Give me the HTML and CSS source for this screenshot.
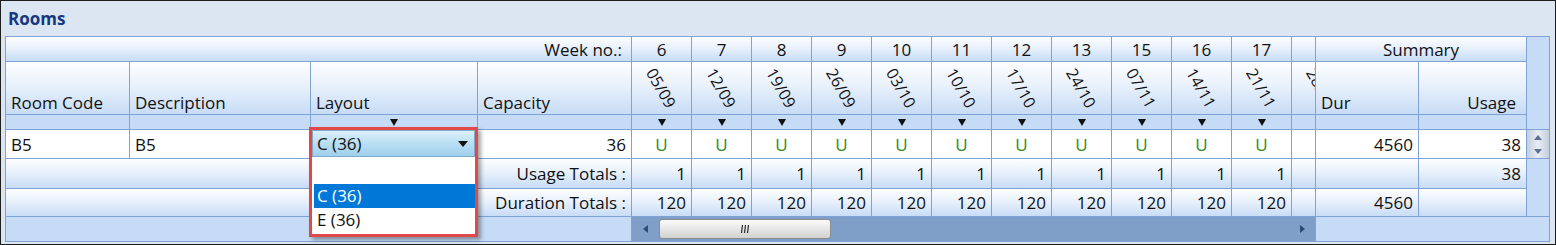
FILE: index.html
```html
<!DOCTYPE html>
<html lang="en">
<head>
    <meta charset="UTF-8">
    <title>Rooms</title>
    <link rel="stylesheet" href="styles.css">
</head>
<body>
    <div class="panel">
        <div class="panel-title">Rooms</div>

        <div class="grid">
            <!-- week numbers -->
            <div class="cell head week-label">Week no.:</div>
            <div class="cell head center">6</div>
            <div class="cell head center">7</div>
            <div class="cell head center">8</div>
            <div class="cell head center">9</div>
            <div class="cell head center">10</div>
            <div class="cell head center">11</div>
            <div class="cell head center">12</div>
            <div class="cell head center">13</div>
            <div class="cell head center">15</div>
            <div class="cell head center">16</div>
            <div class="cell head center">17</div>
            <div class="cell head"></div>
            <div class="cell head center summary">Summary</div>
            <div class="cell side vfill-top"></div>

            <!-- column titles -->
            <div class="cell head title">Room Code</div>
            <div class="cell head title">Description</div>
            <div class="cell head title">Layout</div>
            <div class="cell head title">Capacity</div>
            <div class="cell head date"><span>05/09</span></div>
            <div class="cell head date"><span>12/09</span></div>
            <div class="cell head date"><span>19/09</span></div>
            <div class="cell head date"><span>26/09</span></div>
            <div class="cell head date"><span>03/10</span></div>
            <div class="cell head date"><span>10/10</span></div>
            <div class="cell head date"><span>17/10</span></div>
            <div class="cell head date"><span>24/10</span></div>
            <div class="cell head date"><span>07/11</span></div>
            <div class="cell head date"><span>14/11</span></div>
            <div class="cell head date"><span>21/11</span></div>
            <div class="cell head date clip"><div class="ghost"><span>28/11</span></div></div>
            <div class="cell head title">Dur</div>
            <div class="cell head title right">Usage</div>

            <!-- filter row -->
            <div class="cell filter"></div>
            <div class="cell filter"></div>
            <div class="cell filter center"><i class="tri"></i></div>
            <div class="cell filter"></div>
            <div class="cell filter center"><i class="tri"></i></div>
            <div class="cell filter center"><i class="tri"></i></div>
            <div class="cell filter center"><i class="tri"></i></div>
            <div class="cell filter center"><i class="tri"></i></div>
            <div class="cell filter center"><i class="tri"></i></div>
            <div class="cell filter center"><i class="tri"></i></div>
            <div class="cell filter center"><i class="tri"></i></div>
            <div class="cell filter center"><i class="tri"></i></div>
            <div class="cell filter center"><i class="tri"></i></div>
            <div class="cell filter center"><i class="tri"></i></div>
            <div class="cell filter center"><i class="tri"></i></div>
            <div class="cell filter"></div>
            <div class="cell filter"></div>
            <div class="cell filter"></div>

            <!-- data row -->
            <div class="cell data">B5</div>
            <div class="cell data">B5</div>
            <div class="cell data layout">
                <div class="dropdown">
                    <div class="combo">
                        <span>C (36)</span>
                        <i class="combo-arrow"></i>
                    </div>
                    <div class="list">
                        <div class="item"></div>
                        <div class="item selected">C (36)</div>
                        <div class="item">E (36)</div>
                    </div>
                </div>
            </div>
            <div class="cell data num">36</div>
            <div class="cell data center usage">U</div>
            <div class="cell data center usage">U</div>
            <div class="cell data center usage">U</div>
            <div class="cell data center usage">U</div>
            <div class="cell data center usage">U</div>
            <div class="cell data center usage">U</div>
            <div class="cell data center usage">U</div>
            <div class="cell data center usage">U</div>
            <div class="cell data center usage">U</div>
            <div class="cell data center usage">U</div>
            <div class="cell data center usage">U</div>
            <div class="cell data"></div>
            <div class="cell data num">4560</div>
            <div class="cell data num">38</div>
            <div class="cell vscroll">
                <i class="arrow-up"></i>
                <i class="arrow-down"></i>
            </div>

            <!-- usage totals -->
            <div class="cell total num label">Usage Totals :</div>
            <div class="cell total num">1</div>
            <div class="cell total num">1</div>
            <div class="cell total num">1</div>
            <div class="cell total num">1</div>
            <div class="cell total num">1</div>
            <div class="cell total num">1</div>
            <div class="cell total num">1</div>
            <div class="cell total num">1</div>
            <div class="cell total num">1</div>
            <div class="cell total num">1</div>
            <div class="cell total num">1</div>
            <div class="cell total"></div>
            <div class="cell total"></div>
            <div class="cell total num">38</div>
            <div class="cell side vfill-bottom"></div>

            <!-- duration totals -->
            <div class="cell total num label">Duration Totals :</div>
            <div class="cell total num">120</div>
            <div class="cell total num">120</div>
            <div class="cell total num">120</div>
            <div class="cell total num">120</div>
            <div class="cell total num">120</div>
            <div class="cell total num">120</div>
            <div class="cell total num">120</div>
            <div class="cell total num">120</div>
            <div class="cell total num">120</div>
            <div class="cell total num">120</div>
            <div class="cell total num">120</div>
            <div class="cell total"></div>
            <div class="cell total num">4560</div>
            <div class="cell total"></div>

            <!-- horizontal scroll row -->
            <div class="cell side scroll-left"></div>
            <div class="cell hscroll">
                <i class="arrow-left"></i>
                <div class="thumb">
                    <svg width="10" height="10" viewBox="0 0 10 10">
                        <path d="M2.5 1 L1.5 9 M5.5 1 L4.5 9 M8.5 1 L7.5 9" stroke="#2b2b2b" stroke-width="1.2" fill="none"/>
                    </svg>
                </div>
                <div class="track-rest"></div>
                <i class="arrow-right"></i>
            </div>
            <div class="cell side scroll-right"></div>
        </div>
    </div>
</body>
</html>
```

FILE: styles.css
```css
body {
    margin: 0;
    font-family: 'Open Sans', 'Noto Sans', sans-serif;
    font-size: 17px;
    color: #111;
}

.panel {
    width: 1556px;
    height: 245px;
    box-sizing: border-box;
    border: 1px solid #1d1d1d;
    background-color: #dce6f2;
}
.panel-title {
    height: 35px;
    line-height: 36px;
    padding-left: 7px;
    font-weight: bold;
    color: #17377f;
}

.grid {
    display: grid;
    grid-template-columns: 123px 180px 166px 153px repeat(11, 59px) 23px 102px 107px 22px;
    grid-template-rows: 24px 52px 14px 28px 29px 27px 24px;
    gap: 1px;
    padding: 1px;
    margin-left: 4px;
    width: max-content;
    background-color: #80a3d5;
}

.cell {
    display: flex;
    align-items: center;
    padding: 0 5px;
    white-space: nowrap;
    min-width: 0;
}
.center {
    justify-content: center;
    padding: 0;
}
.num {
    justify-content: flex-end;
}

.head {
    background: linear-gradient(#fdfeff, #e9f1fb 45%, #c7dcf6);
}
.week-label {
    grid-column: 1 / 5;
    justify-content: flex-end;
    padding-right: 9px;
}
.summary {
    grid-column: 17 / 19;
}
.side {
    background-color: #c6dbf5;
}
.vfill-top {
    grid-column: 19;
    grid-row: 1 / 4;
}
.vfill-bottom {
    grid-column: 19;
    grid-row: 5 / 7;
}

.title {
    align-items: flex-end;
    line-height: 20px;
    padding-bottom: 1px;
}
.title.right {
    justify-content: flex-end;
    padding-right: 10px;
}

.date {
    justify-content: center;
    padding: 0;
}
.date span {
    display: inline-block;
    font-size: 16px;
    transform: rotate(60deg);
}
.date.clip {
    justify-content: flex-start;
    overflow: hidden;
}
.ghost {
    flex: none;
    width: 59px;
    display: flex;
    justify-content: center;
}

.filter {
    background-color: #c6dbf5;
}
.tri {
    width: 0;
    height: 0;
    border-left: 4.5px solid transparent;
    border-right: 4.5px solid transparent;
    border-top: 7px solid #111;
}

.data {
    background-color: #fff;
}
.usage {
    color: #2f8a1d;
}
.layout {
    position: relative;
}

/* open layout picker, drawn over the rows below */
.dropdown {
    position: absolute;
    left: -2px;
    top: -3px;
    z-index: 5;
    width: 169px;
    height: 110px;
    box-sizing: border-box;
    border: 3px solid #e0484a;
    background-color: #fff;
    box-shadow: 3px 3px 4px rgba(0, 0, 0, 0.35);
}
.combo {
    height: 27px;
    box-sizing: border-box;
    display: flex;
    align-items: center;
    justify-content: space-between;
    padding: 0 6px 0 4px;
    border: 1px solid #7fa9c8;
    background: linear-gradient(#dcf0fb, #b8def3 50%, #a0d0ec);
}
.combo-arrow {
    width: 0;
    height: 0;
    border-left: 5px solid transparent;
    border-right: 5px solid transparent;
    border-top: 6px solid #111;
}
.list {
    padding-left: 2px;
}
.item {
    height: 24px;
    line-height: 24px;
    padding-left: 3px;
}
.item:first-child {
    height: 27px;
}
.selected {
    background-color: #0078d7;
    color: #fff;
}

.vscroll {
    flex-direction: column;
    justify-content: space-between;
    padding: 5px 0 4px;
    background: linear-gradient(to right, #c3cedd, #e9edf3 50%, #c3cedd);
}
.arrow-up {
    width: 0;
    height: 0;
    border-left: 4px solid transparent;
    border-right: 4px solid transparent;
    border-bottom: 5px solid #5d7190;
}
.arrow-down {
    width: 0;
    height: 0;
    border-left: 4px solid transparent;
    border-right: 4px solid transparent;
    border-top: 5px solid #5d7190;
}

.total {
    background: linear-gradient(#fdfeff, #e9f1fb 45%, #c8dcf6);
}
.label {
    grid-column: 1 / 5;
}

.scroll-left {
    grid-column: 1 / 5;
}
.hscroll {
    grid-column: 5 / 17;
    padding: 0;
    background-color: #7f9ec8;
}
.scroll-right {
    grid-column: 17 / 20;
}
.arrow-left {
    margin-left: 11px;
    width: 0;
    height: 0;
    border-top: 4px solid transparent;
    border-bottom: 4px solid transparent;
    border-right: 5px solid #2f4b70;
}
.arrow-right {
    margin-right: 10px;
    width: 0;
    height: 0;
    border-top: 4px solid transparent;
    border-bottom: 4px solid transparent;
    border-left: 5px solid #2f4b70;
}
.thumb {
    margin-left: 11px;
    width: 172px;
    height: 20px;
    box-sizing: border-box;
    display: flex;
    align-items: center;
    justify-content: center;
    border: 1px solid #8c8c8c;
    border-radius: 3px;
    background: linear-gradient(#fbfbfb, #e6e6e6 50%, #d2d2d2);
}
.track-rest {
    flex: 1;
}
```
